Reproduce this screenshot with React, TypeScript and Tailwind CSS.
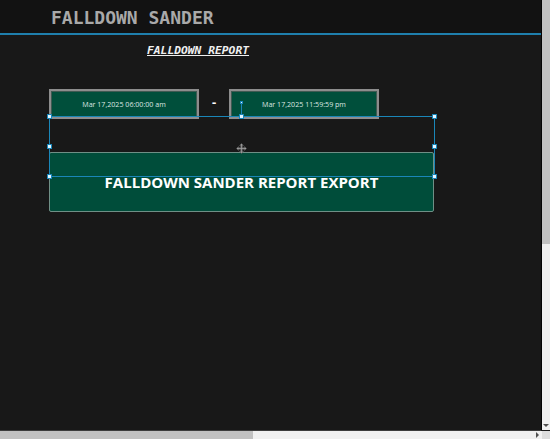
import React from "react";

function Handle({ x, y }: { x: number; y: number }) {
  return (
    <div
      className="absolute w-[5px] h-[5px] bg-[#e6f6ff] border border-[#1a86b8]"
      style={{ left: x - 2, top: y - 2 }}
    />
  );
}

function DateBox({ text }: { text: string }) {
  return (
    <div className="w-[150px] h-[30px] border-2 border-[#8d8d8d] bg-[#004f3b] flex items-center justify-center shadow-[inset_0_0_0_1px_#3f5a52]">
      <span className="text-[7.1px] text-[#dde6e1]" style={{ fontFamily: '"Open Sans", sans-serif' }}>
        {text}
      </span>
    </div>
  );
}

export default function App() {
  return (
    <div className="w-[550px] h-[439px] flex flex-col bg-[#181818] overflow-hidden">
      <div className="flex flex-1 min-h-0">
        <div className="relative w-[541px] flex flex-col overflow-hidden">
          <div className="h-[33px] bg-[#121212] flex items-center pl-[51px] pt-[2px]">
            <span
              className="text-[18px] font-bold text-[#a9a9a9] leading-none"
              style={{ fontFamily: '"DejaVu Sans Mono", monospace' }}
            >
              FALLDOWN SANDER
            </span>
          </div>
          <div className="h-[2px] bg-[#1f7fad]" />
          <div className="flex-1 bg-[#181818] flex flex-col">
            <div className="pl-[147px] pt-[10px] h-[54px]">
              <span
                className="block text-[11.3px] font-bold italic underline text-[#f0f0f0] leading-none"
                style={{ fontFamily: '"DejaVu Sans Mono", monospace' }}
              >
                FALLDOWN REPORT
              </span>
            </div>
            <div className="flex items-center pl-[49px]">
              <DateBox text="Mar 17,2025 06:00:00 am" />
              <div className="w-[30px] flex justify-center">
                <span
                  className="text-[13px] font-bold text-white leading-none -mt-[3px]"
                  style={{ fontFamily: '"Open Sans", sans-serif' }}
                >
                  -
                </span>
              </div>
              <DateBox text="Mar 17,2025 11:59:59 pm" />
            </div>
            <div className="pl-[49px] pt-[33px]">
              <div className="w-[385px] h-[60px] bg-[#004d3a] border border-[#6f8f86] rounded-[2px] flex items-center justify-center">
                <span
                  className="text-[15px] font-bold text-white leading-none mt-[1px]"
                  style={{ fontFamily: '"Open Sans", sans-serif' }}
                >
                  FALLDOWN SANDER REPORT EXPORT
                </span>
              </div>
            </div>
          </div>
          {/* selection overlay */}
          <div className="absolute left-[49px] top-[116px] w-[386px] h-[61px] border border-[#1a86b8]" />
          <div className="absolute left-[241px] top-[102px] w-[1px] h-[14px] bg-[#1a86b8]" />
          <div className="absolute left-[240px] top-[101px] w-[3px] h-[3px] bg-[#e6f6ff] border border-[#1a86b8]" />
          <Handle x={49} y={116} />
          <Handle x={241} y={116} />
          <Handle x={434} y={116} />
          <Handle x={49} y={146} />
          <Handle x={434} y={146} />
          <Handle x={49} y={176} />
          <Handle x={434} y={176} />
          <svg className="absolute left-[236px] top-[143px]" width="11" height="11" viewBox="0 0 11 11">
            <path
              d="M5.5 0.5 L7.5 2.5 H6.3 V4.7 H8.5 V3.5 L10.5 5.5 L8.5 7.5 V6.3 H6.3 V8.5 H7.5 L5.5 10.5 L3.5 8.5 H4.7 V6.3 H2.5 V7.5 L0.5 5.5 L2.5 3.5 V4.7 H4.7 V2.5 H3.5 Z"
              fill="#9a9a9a"
              stroke="#555"
              strokeWidth="0.5"
            />
          </svg>
        </div>
        <div className="w-[1px] bg-[#050505]" />
        <div className="w-[8px] flex flex-col bg-[#f0f0f0]">
          <div className="h-[244px] bg-[#c1c1c1]" />
          <div className="flex-1 flex flex-col justify-end items-center pb-[3px]">
            <div className="w-0 h-0 border-l-[3px] border-r-[3px] border-t-[3px] border-l-transparent border-r-transparent border-t-[#505050]" />
          </div>
        </div>
      </div>
      <div className="h-[1px] bg-[#3c3c3c] w-[541px]" />
      <div className="h-[8px] flex">
        <div className="w-[542px] flex bg-[#f0f0f0] items-center">
          <div className="w-[253px] h-full bg-[#c1c1c1]" />
          <div className="flex-1 flex justify-end pr-[3px]">
            <div className="w-0 h-0 border-t-[3px] border-b-[3px] border-l-[3px] border-t-transparent border-b-transparent border-l-[#505050]" />
          </div>
        </div>
        <div className="w-[8px] bg-[#dcdcdc]" />
      </div>
    </div>
  );
}
